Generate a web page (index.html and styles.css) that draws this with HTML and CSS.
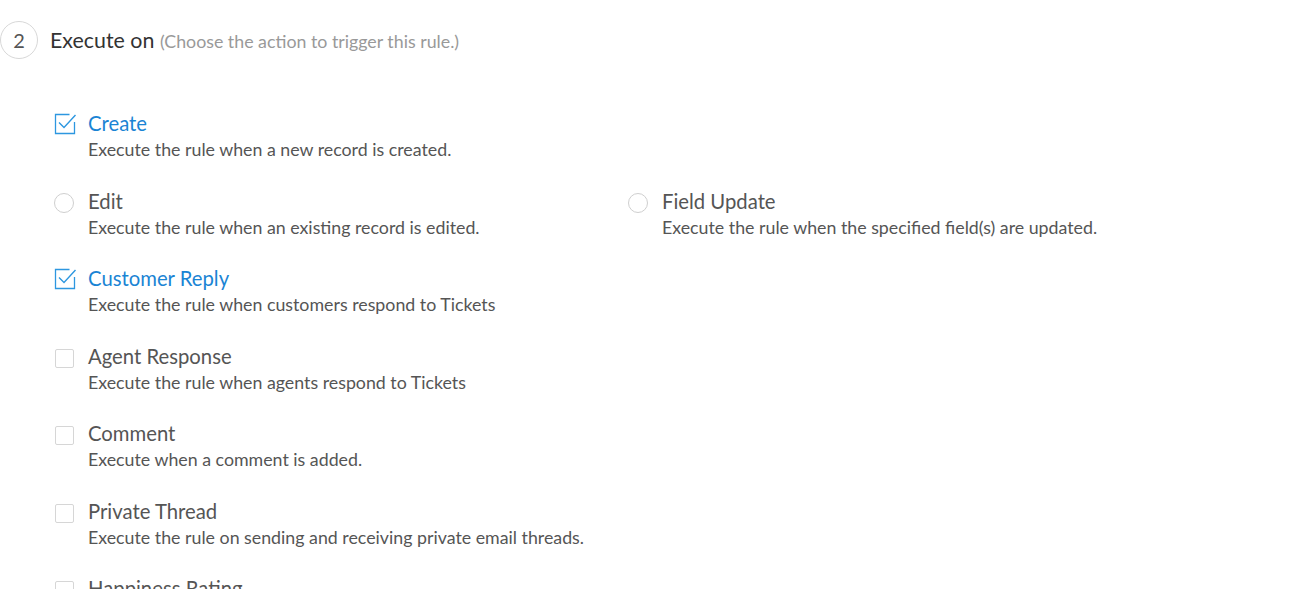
FILE: index.html
```html
<!DOCTYPE html>
<html>
<head>
<meta charset="utf-8">
<link rel="stylesheet" href="styles.css">
</head>
<body>
<div class="page">
  <div class="step">
    <div class="step-num">2</div>
    <div class="step-title">Execute on <span class="step-hint">(Choose the action to trigger this rule.)</span></div>
  </div>
  <div class="options">
    <div class="row">
      <div class="opt">
        <span class="ico"><svg width="24" height="22" viewBox="0 0 24 22"><path d="M15.5 1.5 H1.5 V20.5 H20.5 V9" fill="none" stroke="#2d97e0" stroke-width="1.3"/><path d="M5 9.5 L10 14.5 L21.5 2" fill="none" stroke="#2d97e0" stroke-width="1.4"/></svg></span>
        <div class="txt"><div class="lbl on">Create</div><div class="desc">Execute the rule when a new record is created.</div></div>
      </div>
    </div>
    <div class="row">
      <div class="opt">
        <span class="ico"><span class="radio"></span></span>
        <div class="txt"><div class="lbl">Edit</div><div class="desc">Execute the rule when an existing record is edited.</div></div>
      </div>
      <div class="opt">
        <span class="ico"><span class="radio"></span></span>
        <div class="txt"><div class="lbl">Field Update</div><div class="desc">Execute the rule when the specified field(s) are updated.</div></div>
      </div>
    </div>
    <div class="row">
      <div class="opt">
        <span class="ico"><svg width="24" height="22" viewBox="0 0 24 22"><path d="M15.5 1.5 H1.5 V20.5 H20.5 V9" fill="none" stroke="#2d97e0" stroke-width="1.3"/><path d="M5 9.5 L10 14.5 L21.5 2" fill="none" stroke="#2d97e0" stroke-width="1.4"/></svg></span>
        <div class="txt"><div class="lbl on">Customer Reply</div><div class="desc">Execute the rule when customers respond to Tickets</div></div>
      </div>
    </div>
    <div class="row">
      <div class="opt">
        <span class="ico"><span class="box"></span></span>
        <div class="txt"><div class="lbl">Agent Response</div><div class="desc">Execute the rule when agents respond to Tickets</div></div>
      </div>
    </div>
    <div class="row">
      <div class="opt">
        <span class="ico"><span class="box"></span></span>
        <div class="txt"><div class="lbl">Comment</div><div class="desc">Execute when a comment is added.</div></div>
      </div>
    </div>
    <div class="row">
      <div class="opt">
        <span class="ico"><span class="box"></span></span>
        <div class="txt"><div class="lbl">Private Thread</div><div class="desc">Execute the rule on sending and receiving private email threads.</div></div>
      </div>
    </div>
    <div class="row">
      <div class="opt">
        <span class="ico"><span class="box"></span></span>
        <div class="txt"><div class="lbl">Happiness Rating</div><div class="desc">Execute the rule when customers rate the support.</div></div>
      </div>
    </div>
  </div>
</div>
</body>
</html>
```
FILE: styles.css
```css
html, body {
  margin: 0;
  padding: 0;
  background: #fff;
  overflow: hidden;
}
body {
  font-family: Lato, "Open Sans", sans-serif;
  color: #555;
}
.page {
  padding: 21px 0 0 0;
}
.step {
  display: flex;
  align-items: center;
  gap: 12px;
}
.step-num {
  width: 36px;
  height: 36px;
  border: 1px solid #d8d8d8;
  border-radius: 50%;
  display: flex;
  align-items: center;
  justify-content: center;
  font-size: 20px;
  color: #555;
  flex: none;
}
.step-title {
  font-size: 21.4px;
  color: #333;
}
.step-hint {
  font-size: 17.8px;
  color: #999;
}
.options {
  padding: 51px 0 0 54px;
}
.row {
  display: flex;
  height: 77.5px;
}
.opt {
  display: flex;
  width: 574px;
}
.ico {
  width: 34px;
  flex: none;
  height: 26px;
  display: flex;
  align-items: flex-start;
  padding-top: 4px;
  box-sizing: border-box;
}
.ico svg {
  display: block;
  margin-top: -1px;
}
.radio {
  width: 18px;
  height: 18px;
  border: 1px solid #cfcfcf;
  border-radius: 50%;
  margin-top: 1px;
}
.box {
  width: 17px;
  height: 17px;
  border: 1px solid #d6d6d6;
  border-radius: 2px;
  margin-left: 1px;
  margin-top: 2px;
}
.lbl {
  font-size: 20.3px;
  line-height: 26px;
  color: #555;
}
.lbl.on {
  color: #1a84d4;
}
.desc {
  font-size: 17.8px;
  line-height: 26px;
  color: #555;
}
```
